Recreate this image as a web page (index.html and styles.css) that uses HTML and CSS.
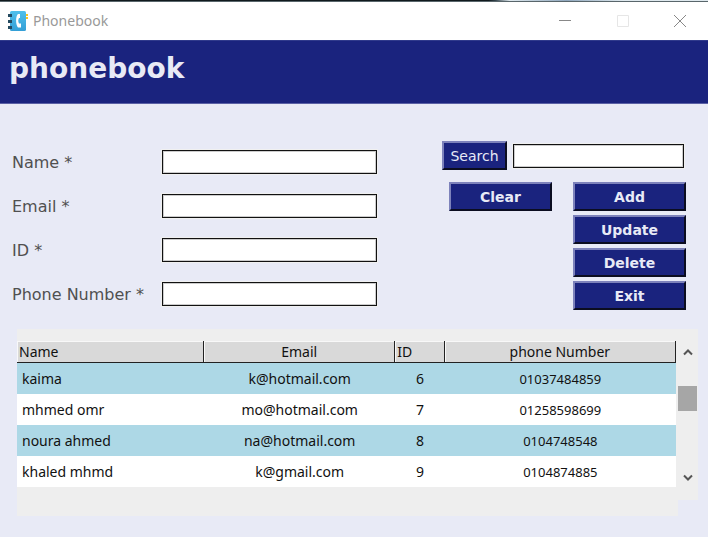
FILE: index.html
```html
<!DOCTYPE html>
<html lang="en">
<head>
<meta charset="utf-8">
<title>Phonebook</title>
<link rel="stylesheet" href="styles.css">
</head>
<body>
<div class="desktop-edge"></div>
<header class="titlebar">
  <svg class="app-icon" width="20" height="20" viewBox="0 0 20 20" aria-hidden="true">
    <defs><linearGradient id="cover" x1="0" y1="0" x2="0" y2="1"><stop offset="0" stop-color="#4fc0ec"/><stop offset="1" stop-color="#349fd6"/></linearGradient></defs>
    <path fill="#fbc51b" d="M17 3h3v2h-3zM17 6h3v2h-3z"/>
    <rect x="2" y="0" width="16" height="20" rx="1.5" fill="url(#cover)"/>
    <path fill="#244a60" d="M0 3h4v3H0zM0 9h4v3H0zM0 15h4v3H0z"/>
    <path fill="#fff" d="M12 3h-2C7.500 5 7.500 14 10 16.500h3v-4h-2c-1-2-1-3.500 0-5.500h1V3z"/>
  </svg>
  <span class="titlebar-name">Phonebook</span>
  <div class="window-controls">
    <button type="button" aria-label="Minimize"><svg width="12" height="12" viewBox="0 0 12 12"><path d="M0 5.500h12" stroke="#888"/></svg></button>
    <button type="button" aria-label="Maximize" disabled><svg width="12" height="12" viewBox="0 0 12 12"><path d="M.5.5h11v11H.5z" fill="none" stroke="#e6e6e6"/></svg></button>
    <button type="button" aria-label="Close"><svg width="12" height="12" viewBox="0 0 12 12"><path d="M0 0l12 12M12 0L0 12" stroke="#888"/></svg></button>
  </div>
</header>
<div class="banner"><h1>phonebook</h1></div>
<main>
  <div class="editor">
    <form class="fields">
      <label for="name">Name *</label><input id="name" type="text">
      <label for="email">Email *</label><input id="email" type="text">
      <label for="contact-id">ID *</label><input id="contact-id" type="text">
      <label for="phone">Phone Number *</label><input id="phone" type="text">
    </form>
    <div class="actions">
      <div class="search">
        <button class="btn btn-search" type="button">Search</button>
        <input type="text" aria-label="Search">
      </div>
      <div class="commands">
        <button class="btn btn-clear" type="button">Clear</button>
        <div class="stack">
          <button class="btn" type="button">Add</button>
          <button class="btn" type="button">Update</button>
          <button class="btn" type="button">Delete</button>
          <button class="btn" type="button">Exit</button>
        </div>
      </div>
    </div>
  </div>
  <section class="contacts">
    <div class="table-pane">
      <table>
        <colgroup><col class="col-name"><col class="col-email"><col class="col-id"><col class="col-phone"></colgroup>
        <thead><tr><th class="left">Name</th><th>Email</th><th class="left">ID</th><th>phone Number</th></tr></thead>
        <tbody>
          <tr><td>kaima</td><td>k@hotmail.com</td><td>6</td><td>01037484859</td></tr>
          <tr><td>mhmed omr</td><td>mo@hotmail.com</td><td>7</td><td>01258598699</td></tr>
          <tr><td>noura ahmed</td><td>na@hotmail.com</td><td>8</td><td>0104748548</td></tr>
          <tr><td>khaled mhmd</td><td>k@gmail.com</td><td>9</td><td>0104874885</td></tr>
        </tbody>
      </table>
    </div>
    <div class="scrollbar">
      <button type="button" aria-label="Scroll up"><svg width="10" height="8" viewBox="0 0 10 8"><path d="M1 6.500l4-4 4 4" fill="none" stroke="#555" stroke-width="2"/></svg></button>
      <div class="track"><div class="thumb"></div></div>
      <button type="button" aria-label="Scroll down"><svg width="10" height="8" viewBox="0 0 10 8"><path d="M1 1.500l4 4 4-4" fill="none" stroke="#555" stroke-width="2"/></svg></button>
    </div>
  </section>
</main>
</body>
</html>
```
FILE: styles.css
```css
* { box-sizing: border-box; }

body {
  margin: 0;
  background: #e8eaf6;
  color: #505050;
  font-family: "DejaVu Sans", Verdana, sans-serif;
}

button { margin: 0; font-family: inherit; }

.desktop-edge {
  height: 2px;
  background: linear-gradient(to right, #10191d 69%, #34444c 70%, #dfe9ee 72%, #8fa7bd 80%, #dfe9ee 88%, #dfe9ee);
  border-bottom: 1px solid #59666b;
}

.titlebar {
  display: flex;
  align-items: center;
  height: 38px;
  padding-left: 8px;
  background: #fff;
}

.titlebar-name {
  margin-left: 5px;
  color: #999;
  font: 14px/20px "Noto Sans", "Segoe UI", sans-serif;
}

.window-controls { display: flex; margin-left: auto; }

.window-controls button {
  display: grid;
  place-items: center;
  width: 58px;
  height: 38px;
  padding: 0;
  border: 0;
  background: none;
}

.window-controls button:last-child { width: 56px; }

.banner {
  height: 64px;
  padding: 12px 9px;
  background: #1a237e;
  border-top: 1px solid #303a8c;
  border-bottom: 1px solid #5a60a5;
}

h1 {
  margin: 0;
  color: #e8eaf6;
  font-size: 28px;
  line-height: 32px;
}

.editor {
  display: flex;
  gap: 65px;
  padding: 37px 22px 0 12px;
}

.fields {
  flex: 1;
  display: grid;
  grid-template-columns: 150px 1fr;
  grid-auto-rows: 24px;
  row-gap: 20px;
  align-content: start;
  align-items: center;
  padding-top: 9px;
}

label { font-size: 16px; }

input {
  width: 100%;
  min-width: 0;
  height: 24px;
  padding: 0 4px;
  border: 1px solid #111;
  background: #fff;
  box-shadow: 0 0 0 1px #f0f0f0, inset 0 0 0 1px #ccc;
  font: 14px "Noto Sans", sans-serif;
}

.actions { width: 244px; }

.search {
  display: flex;
  align-items: center;
  gap: 6px;
  padding-right: 2px;
}

.commands {
  display: flex;
  align-items: flex-start;
  justify-content: space-between;
  padding: 12px 0 0 7px;
}

.btn {
  height: 29px;
  padding: 0;
  border: 2px solid;
  border-color: #7d82bb #0b0d20 #0b0d20 #7d82bb;
  background: #1a237e;
  color: #e8eaf6;
  font-size: 14px;
  font-weight: bold;
}

.btn-search { flex: 0 0 65px; font-weight: normal; }
.btn-clear { width: 103px; }

.stack {
  display: grid;
  gap: 4px;
  width: 113px;
}

.contacts {
  display: flex;
  align-items: flex-start;
  margin: 19px 10px 20px 17px;
}

.table-pane {
  flex: 1;
  padding: 12px 2px 29px 0;
  background: #eee;
}

table {
  width: 100%;
  table-layout: fixed;
  border-collapse: separate;
  border-spacing: 0;
  color: #111;
  font: 14px/20px "Noto Sans", "Segoe UI", sans-serif;
}

.col-name { width: 28.400%; }
.col-email { width: 29%; }
.col-id { width: 7.500%; }

th {
  height: 22px;
  padding: 0;
  border: solid #222;
  border-width: 0 1px 1px 0;
  background: #d9d9d9;
  box-shadow: inset 1px 1px #f8f8f8;
  font-weight: normal;
}

.left { padding-left: 2px; text-align: left; }

td {
  height: 31px;
  padding: 0;
  background: #fff;
  text-align: center;
}

tbody tr:nth-child(odd) td { background: #add8e6; }
td:first-child { padding-left: 5px; text-align: left; }
td:last-child { font-size: 13px; }

.scrollbar {
  display: flex;
  flex-direction: column;
  width: 20px;
  height: 171px;
  padding: 12px 0 11px;
  background: #eee;
}

.scrollbar button {
  display: grid;
  place-items: center;
  height: 22px;
  padding: 0;
  border: 0;
  background: none;
}

.track { flex: 1; padding-top: 23px; }

.thumb { height: 25px; margin-right: 1px; background: #a6a6a6; }
```
